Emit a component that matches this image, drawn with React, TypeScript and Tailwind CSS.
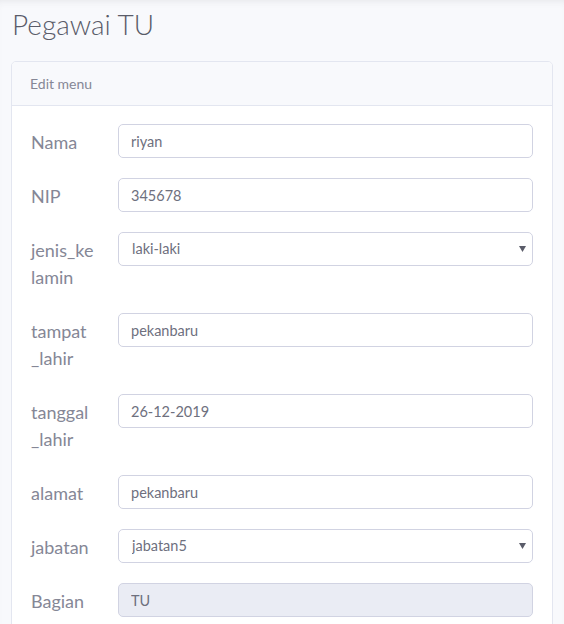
import React from "react";

type Field = {
  label: string[];
  value: string;
  kind?: "text" | "select" | "disabled";
};

const fields: Field[] = [
  { label: ["Nama"], value: "riyan" },
  { label: ["NIP"], value: "345678" },
  { label: ["jenis_ke", "lamin"], value: "laki-laki", kind: "select" },
  { label: ["tampat", "_lahir"], value: "pekanbaru" },
  { label: ["tanggal", "_lahir"], value: "26-12-2019" },
  { label: ["alamat"], value: "pekanbaru" },
  { label: ["jabatan"], value: "jabatan5", kind: "select" },
  { label: ["Bagian"], value: "TU", kind: "disabled" },
];

function Control({ field }: { field: Field }) {
  if (field.kind === "select") {
    return (
      <div className="relative">
        <select
          defaultValue={field.value}
          className="block w-full h-[34px] appearance-none rounded-[5px] border border-[#d1d3e2] bg-white pl-[13px] pr-8 text-[14.5px] text-[#6e707e] outline-none"
        >
          <option value={field.value}>{field.value}</option>
        </select>
        {/* caret */}
        <svg
          className="pointer-events-none absolute right-[7px] top-[14px]"
          width="7"
          height="6"
          viewBox="0 0 7 6"
        >
          <path d="M0 0h7L3.5 6z" fill="#5a5c69" />
        </svg>
      </div>
    );
  }
  return (
    <input
      defaultValue={field.value}
      disabled={field.kind === "disabled"}
      className={
        "block w-full h-[34px] rounded-[5px] border border-[#d1d3e2] px-3 text-[14.5px] text-[#6e707e] outline-none " +
        (field.kind === "disabled" ? "bg-[#eaecf4]" : "bg-white")
      }
    />
  );
}

export default function App() {
  return (
    <div
      className="min-h-[624px] bg-[#f8f9fc] px-[11px] pt-[7px] shadow-[inset_0_6px_8px_-6px_rgba(58,59,69,0.12)]"
      style={{ fontFamily: "Lato, 'Open Sans', sans-serif" }}
    >
      <h1 className="mb-[20px] ml-[1px] text-[28px] font-light leading-[34px] text-[#5a5c69]">
        Pegawai TU
      </h1>

      <div className="w-[542px] overflow-hidden rounded-[5px] border border-[#e3e6f0] bg-white">
        <div className="flex h-[44px] items-center border-b border-[#e3e6f0] bg-[#f8f9fc] px-[18px] text-[14px] text-[#858796]">
          Edit menu
        </div>

        <div className="px-[19px] pt-[18px]">
          {fields.map((f) => (
            <div key={f.label.join("")} className="mb-4 grid grid-cols-[87px_1fr]">
              <label className="pt-[5px] pb-[6px] text-[18px] leading-[27px] text-[#858796]">
                {f.label.map((line, i) => (
                  <span key={i} className="block">
                    {line}
                  </span>
                ))}
              </label>
              <Control field={f} />
            </div>
          ))}
        </div>
      </div>
    </div>
  );
}
